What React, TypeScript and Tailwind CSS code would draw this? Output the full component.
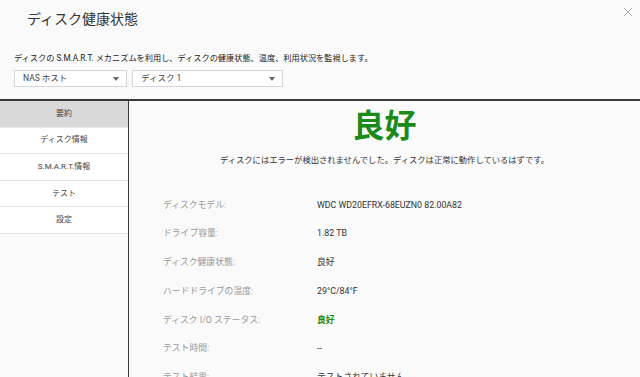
import React from "react";

const rows: { label: string; value: string; green?: boolean }[] = [
  { label: "ディスクモデル:", value: "WDC WD20EFRX-68EUZN0 82.00A82" },
  { label: "ドライブ容量:", value: "1.82 TB" },
  { label: "ディスク健康状態:", value: "良好" },
  { label: "ハードドライブの温度:", value: "29°C/84°F" },
  { label: "ディスク I/O ステータス:", value: "良好", green: true },
  { label: "テスト時間:", value: "--" },
  { label: "テスト結果:", value: "テストされていません" },
];

const menu = ["要約", "ディスク情報", "S.M.A.R.T.情報", "テスト", "設定"];

function Caret() {
  return (
    <svg width="6" height="4" viewBox="0 0 6 4" className="shrink-0">
      <path d="M0 0 L6 0 L3 4 Z" fill="#666" />
    </svg>
  );
}

export default function App() {
  const font = { fontFamily: 'Roboto, "Noto Sans CJK JP", sans-serif' };
  return (
    <div
      className="relative w-[640px] h-[377px] overflow-hidden bg-[#fafafa] text-[#333] flex flex-col"
      style={font}
    >
      {/* Header */}
      <div className="h-[99px] shrink-0 flex flex-col">
        <div className="pl-[27px] pt-[8px] text-[14px] leading-[22px] text-[#333]">ディスク健康状態</div>
        <div className="pl-[14px] mt-[22px] text-[8.2px] leading-[12px] text-[#222]">
          ディスクの S.M.A.R.T. メカニズムを利用し、ディスクの健康状態、温度、利用状況を監視します。
        </div>
        <div className="pl-[14px] mt-[6px] flex gap-[5px]">
          <div className="w-[113px] h-[17px] bg-white border border-[#d6d6d6] flex items-center justify-between pl-[8px] pr-[7px] text-[8.5px] text-[#444]">
            <span>NAS ホスト</span>
            <Caret />
          </div>
          <div className="w-[151px] h-[17px] bg-white border border-[#d6d6d6] flex items-center justify-between pl-[8px] pr-[7px] text-[8.5px] text-[#444]">
            <span>ディスク 1</span>
            <Caret />
          </div>
        </div>
      </div>
      <button className="absolute right-[7px] top-[7px] w-[10px] h-[10px]">
        <svg width="10" height="10" viewBox="0 0 10 10">
          <path d="M1 1 L9 9 M9 1 L1 9" stroke="#aaa" strokeWidth="1" />
        </svg>
      </button>

      {/* Body */}
      <div className="flex-1 flex border-t-[2px] border-[#3a3a3a] min-h-0">
        <div className="w-[129px] shrink-0 border-r border-[#3a3a3a] bg-[#fafafa]">
          {menu.map((m, i) => (
            <div
              key={m}
              className={
                "h-[26.6px] flex items-center justify-center text-[8px] text-[#444] border-b border-[#e6e6e6] " +
                (i === 0 ? "bg-[#d9d9d9]" : "bg-white")
              }
            >
              {m}
            </div>
          ))}
        </div>
        <div className="flex-1 px-[33px] flex flex-col">
          <div className="text-center text-[32px] leading-[40px] font-bold text-[#1a8a1a] mt-[5px]">良好</div>
          <div className="text-center text-[8.3px] leading-[12px] text-[#333] mt-[8px]">
            ディスクにはエラーが検出されませんでした。ディスクは正常に動作しているはずです。
          </div>
          <div className="h-px bg-[#aaa] mt-[13px]" />
          <div className="mt-[12px] flex flex-col">
            {rows.map((r) => (
              <div key={r.label} className="h-[28.7px] shrink-0 flex items-center">
                <div className="w-[155px] pl-[1px] text-[8.8px] text-[#999]">{r.label}</div>
                <div className={"text-[8.8px] " + (r.green ? "text-[#1a8a1a] font-bold" : "text-[#333]")}>
                  {r.value}
                </div>
              </div>
            ))}
          </div>
        </div>
      </div>
    </div>
  );
}
